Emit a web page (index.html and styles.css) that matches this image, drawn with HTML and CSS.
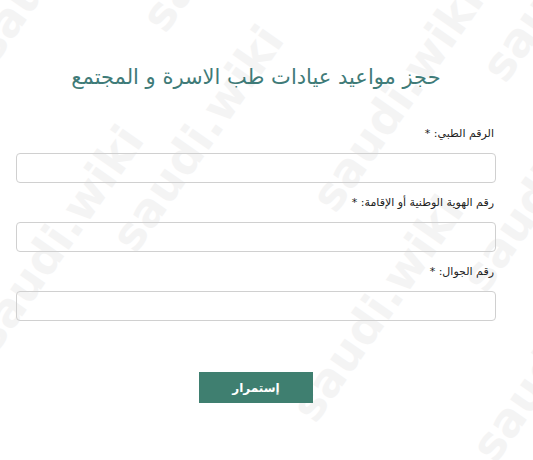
FILE: index.html
```html
<!DOCTYPE html>
<html lang="ar" dir="rtl">
<head>
<meta charset="utf-8">
<link rel="stylesheet" href="styles.css">
</head>
<body>
<div class="watermarks" aria-hidden="true">
  <span class="wm" style="left:-40px;top:40px">saudi.wiki</span>
  <span class="wm" style="left:130px;top:10px">saudi.wiki</span>
  <span class="wm" style="left:320px;top:-30px">saudi.wiki</span>
  <span class="wm" style="left:470px;top:60px">saudi.wiki</span>
  <span class="wm" style="left:100px;top:230px">saudi.wiki</span>
  <span class="wm" style="left:300px;top:190px">saudi.wiki</span>
  <span class="wm" style="left:450px;top:270px">saudi.wiki</span>
  <span class="wm" style="left:-40px;top:330px">saudi.wiki</span>
  <span class="wm" style="left:280px;top:400px">saudi.wiki</span>
  <span class="wm" style="left:460px;top:440px">saudi.wiki</span>
</div>
<main class="page">
  <h1 class="title">حجز مواعيد عيادات طب الاسرة و المجتمع</h1>
  <form class="form">
    <div class="field">
      <label class="label">الرقم الطبي: *</label>
      <input class="input" type="text">
    </div>
    <div class="field">
      <label class="label">رقم الهوية الوطنية أو الإقامة: *</label>
      <input class="input" type="text">
    </div>
    <div class="field">
      <label class="label">رقم الجوال: *</label>
      <input class="input" type="text">
    </div>
    <div class="actions">
      <button class="btn" type="button">إستمرار</button>
    </div>
  </form>
</main>
</body>
</html>
```
FILE: styles.css
```css
html, body {
  margin: 0;
  padding: 0;
  background: #fff;
  width: 533px;
  height: 460px;
  overflow: hidden;
}
body {
  position: relative;
  font-family: "DejaVu Sans", sans-serif;
}
.watermarks {
  position: absolute;
  inset: 0;
  overflow: hidden;
  pointer-events: none;
  direction: ltr;
}
.wm {
  position: absolute;
  font-family: "DejaVu Sans", sans-serif;
  font-weight: bold;
  font-size: 46px;
  color: #f4f4f4;
  transform: rotate(-55deg);
  transform-origin: left top;
  white-space: nowrap;
}
.page {
  position: relative;
  padding: 0 37px 0 16px;
}
.title {
  margin: 0;
  padding-top: 62px;
  height: 38px;
  text-align: center;
  font-family: "DejaVu Sans", sans-serif;
  font-weight: normal;
  font-size: 21px;
  color: #3f7b78;
  line-height: 30px;
}
.form {
  margin-top: 26px;
  display: flex;
  flex-direction: column;
}
.field {
  display: flex;
  flex-direction: column;
  margin-bottom: 12px;
}
.label {
  font-size: 11px;
  color: #222;
  line-height: 16px;
  margin-bottom: 11px;
  padding-right: 2px;
}
.input {
  box-sizing: border-box;
  height: 30px;
  border: 1px solid #d0d0d0;
  border-radius: 4px;
  background: transparent;
  margin: 0;
}
.actions {
  display: flex;
  justify-content: flex-start;
  padding-left: 183px;
  margin-top: 39px;
  direction: ltr;
}
.btn {
  width: 114px;
  height: 31px;
  border: none;
  background: #3f7f70;
  color: #fff;
  font-family: "DejaVu Sans", sans-serif;
  font-weight: bold;
  font-size: 12px;
  cursor: pointer;
}
```
